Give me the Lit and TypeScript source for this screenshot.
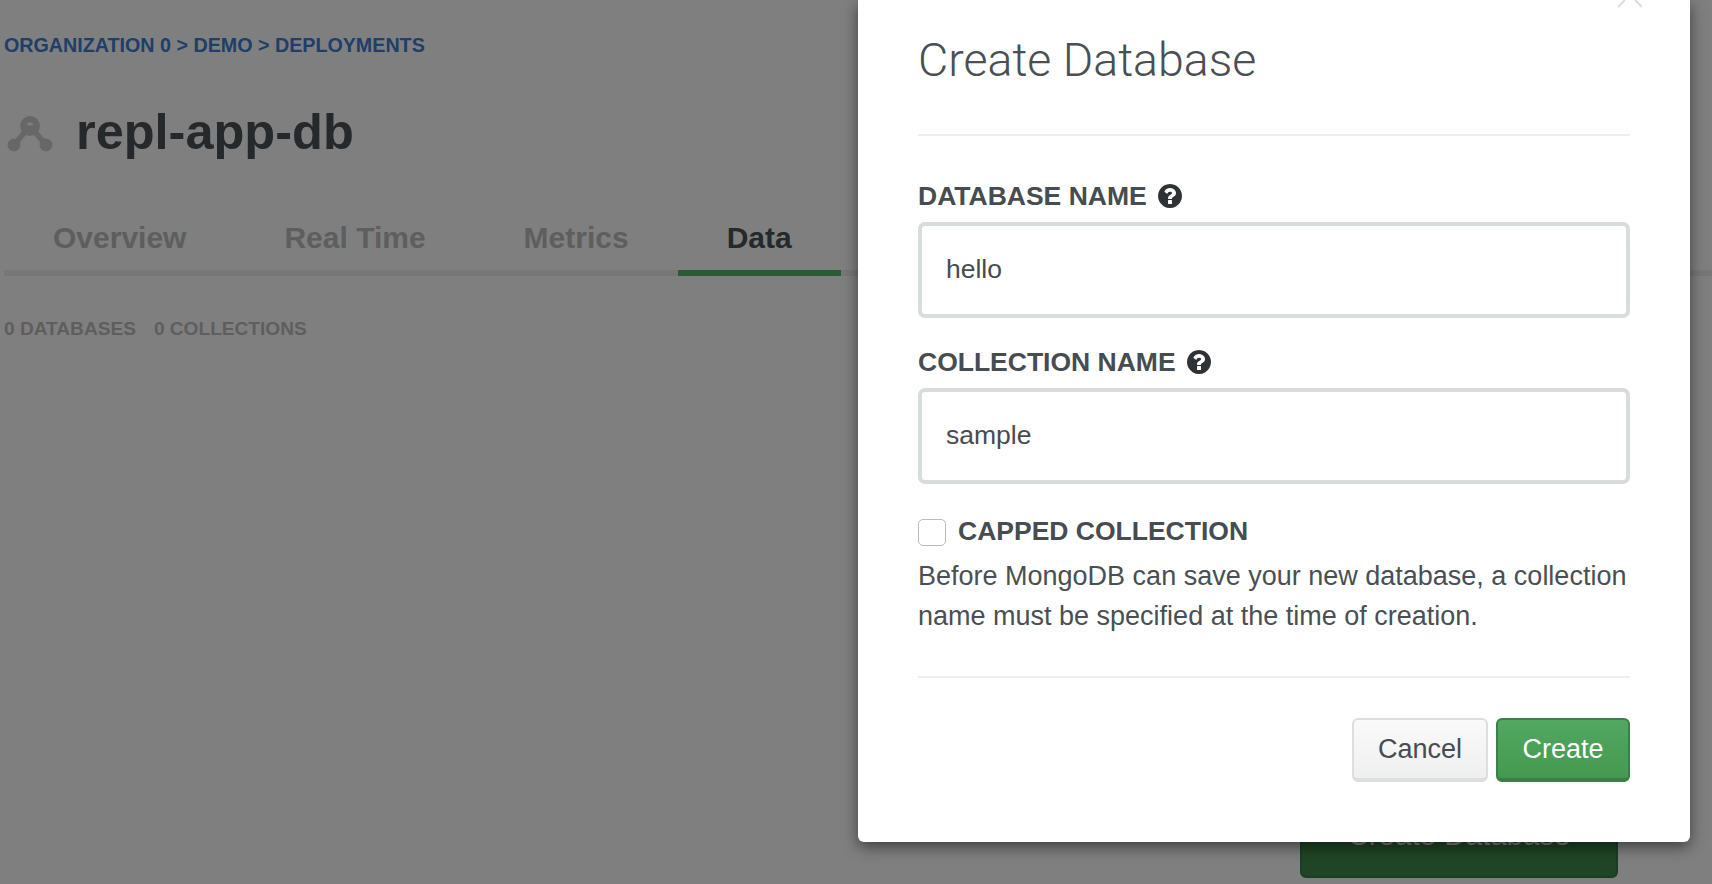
import { LitElement, html, css, svg } from 'lit';
import { customElement } from 'lit/decorators.js';

const helpIcon = html`<svg class="help" viewBox="0 128 1536 1536"><path fill="#2f3335" d="M896 1376v-192q0-14-9-23t-23-9h-192q-14 0-23 9t-9 23v192q0 14 9 23t23 9h192q14 0 23-9t9-23zm256-672q0-88-55.5-163t-138.5-116-170-41q-243 0-371 213-15 24 8 42l132 100q7 6 19 6 16 0 25-12 53-68 86-92 34-24 86-24 48 0 85.5 26t37.5 59q0 38-20 61t-68 45q-63 28-115.5 86.5t-52.5 125.5v36q0 14 9 23t23 9h192q14 0 23-9t9-23q0-19 21.5-49.5t54.5-49.5q32-18 49-28.5t46-35 44.5-48 28-60.5 12.5-81zm384 192q0 209-103 385.5t-279.5 279.5-385.5 103-385.5-103-279.5-279.5-103-385.5 103-385.5 279.5-279.5 385.5-103 385.5 103 279.5 279.5 103 385.5z"/></svg>`;

const replIcon = svg`
  <path d="M24 11 L8 30 M24 11 L40 30" stroke="#cfcfcf" stroke-width="5.5" fill="none"/>
  <circle cx="8" cy="30" r="6.5" fill="#cfcfcf"/>
  <circle cx="40" cy="30" r="6.5" fill="#cfcfcf"/>
  <circle cx="24" cy="11" r="6.8" fill="none" stroke="#cfcfcf" stroke-width="6.4"/>
`;

@customElement('app-root')
export class AppRoot extends LitElement {
  static styles = css`
    :host {
      display: block;
      position: relative;
      width: 1712px;
      height: 884px;
      overflow: hidden;
      background: #fff;
      font-family: "Liberation Sans", Arial, sans-serif;
      color: #494f52;
    }
    .page { padding: 33px 0 0 4px; }
    .crumbs { font-size: 19.7px; line-height: 24px; font-weight: 700; color: #3a7fd5; }
    .title-row { display: flex; align-items: center; margin-top: 37px; height: 74px; }
    .title-row svg { width: 48px; height: 38px; margin: 6px 22px 0 2px; }
    .title-row h1 { margin: 0; font-size: 50.5px; font-weight: 700; color: #4a5256; }
    .tabs { display: flex; height: 80px; margin-top: 22px; border-bottom: 6px solid #eee; }
    .tab {
      box-sizing: border-box; height: 86px; padding: 16px 49px 0; display: flex; align-items: center;
      font-size: 30px; font-weight: 700; color: #bdbdbd; border-bottom: 6px solid transparent;
    }
    .tab.active { color: #4a5256; border-bottom-color: #55b968; }
    .stats { display: flex; gap: 18px; margin-top: 41px; font-size: 19.1px; line-height: 24px; font-weight: 700; color: #bdbdbd; }
    .actions { display: flex; justify-content: flex-end; margin: 451px 94px 0 0; }
    .big-btn {
      box-sizing: border-box; width: 318px; height: 86px; padding-bottom: 1px; border-radius: 6px;
      display: flex; justify-content: center; align-items: center;
      background: #408a4c; border: 2px solid #387a43; color: #fff; font-size: 29.5px;
    }
    .overlay { position: absolute; inset: 0; background: rgba(0, 0, 0, .5); }
    .modal {
      position: absolute; left: 858px; top: 0; width: 832px; height: 842px;
      box-sizing: border-box; padding: 0 60px; background: #fff;
      border-radius: 0 0 6px 6px; box-shadow: 0 5px 15px rgba(0, 0, 0, .5);
    }
    .close { position: absolute; left: 760px; top: 0; width: 24px; height: 8px; }
    .head { height: 136px; box-sizing: border-box; border-bottom: 2px solid #eee; display: flex; align-items: center; padding-bottom: 14px; }
    .head h2 { margin: 0; font-family: Roboto, sans-serif; font-size: 46.5px; font-weight: 300; color: #494f52; }
    .label { display: flex; align-items: center; gap: 11px; height: 30px; font-size: 26.5px; font-weight: 700; color: #464c4f; }
    .label.first { margin-top: 45px; }
    .label.second { margin-top: 29px; }
    .help { width: 24px; height: 24px; }
    input[type=text] {
      display: block; box-sizing: border-box; width: 100%; height: 96px; margin-top: 11px; padding: 0 0 2px 24px;
      border: 4px solid #d9dcdc; border-radius: 7px; background: #fff; outline: none;
      font: 26.5px "Liberation Sans", Arial, sans-serif; color: #464c4f;
    }
    .check-row { display: flex; align-items: center; gap: 12px; height: 28px; margin-top: 34px; font-size: 26.5px; font-weight: 700; color: #464c4f; }
    .check-row span:last-child { margin-bottom: 2px; }
    .box { box-sizing: border-box; width: 28px; height: 27px; border: 1.5px solid #b8bcbc; border-radius: 5px; }
    .desc { margin: 10px 0 0; font-size: 27px; line-height: 40px; color: #494f52; }
    .foot { display: flex; justify-content: flex-end; gap: 8px; margin-top: 40px; padding-top: 40px; border-top: 2px solid #eee; }
    .btn {
      box-sizing: border-box; height: 64px; display: flex; align-items: center; justify-content: center;
      border-radius: 6px; border-style: solid; border-width: 2px 2px 4px; font-size: 27px;
    }
    .cancel { width: 136px; color: #464c4f; background: linear-gradient(#fafafa, #efefef); border-color: #dcdedf; }
    .create { width: 134px; color: #fff; background: linear-gradient(#52a862, #45994f); border-color: #3b8047; }
  `;

  render() {
    return html`
      <div class="page">
        <div class="crumbs">ORGANIZATION 0 &gt; DEMO &gt; DEPLOYMENTS</div>
        <div class="title-row">
          <svg viewBox="0 0 48 38">${replIcon}</svg>
          <h1>repl-app-db</h1>
        </div>
        <div class="tabs">
          <div class="tab">Overview</div>
          <div class="tab">Real Time</div>
          <div class="tab">Metrics</div>
          <div class="tab active">Data</div>
        </div>
        <div class="stats"><span>0 DATABASES</span><span>0 COLLECTIONS</span></div>
        <div class="actions"><div class="big-btn">Create Database</div></div>
      </div>
      <div class="overlay"></div>
      <div class="modal">
        <svg class="close" viewBox="0 0 24 8"><path d="M0 7 L7 0 M24 7 L17 0" stroke="#dcdcdc" stroke-width="2" fill="none"/></svg>
        <div class="head"><h2>Create Database</h2></div>
        <div class="label first">DATABASE NAME ${helpIcon}</div>
        <input type="text" value="hello" />
        <div class="label second">COLLECTION NAME ${helpIcon}</div>
        <input type="text" value="sample" />
        <div class="check-row"><span class="box"></span><span>CAPPED COLLECTION</span></div>
        <p class="desc">Before MongoDB can save your new database, a collection<br />name must be specified at the time of creation.</p>
        <div class="foot">
          <div class="btn cancel">Cancel</div>
          <div class="btn create">Create</div>
        </div>
      </div>
    `;
  }
}
